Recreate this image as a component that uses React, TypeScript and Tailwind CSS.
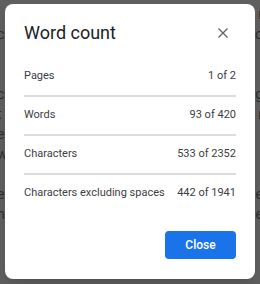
import React from "react";

const rows = [
  { label: "Pages", value: "1 of 2" },
  { label: "Words", value: "93 of 420" },
  { label: "Characters", value: "533 of 2352" },
  { label: "Characters excluding spaces", value: "442 of 1941" },
];

const bgLines: [string, string][] = [
  ["", "r"],
  ["c", "o"],
  ["", ""],
  ["", ""],
  ["c", "g"],
  ["t", "r"],
  ["e", "'"],
  ["w", "'"],
  ["", ""],
  ["e", "e"],
  ["hi", "ne"],
];

export default function App() {
  return (
    <div
      className="relative w-[260px] h-[284px] overflow-hidden bg-[#5f5f5f]"
      style={{ fontFamily: "Roboto, 'Liberation Sans', sans-serif" }}
    >
      <div className="flex flex-col pt-[4px] text-[#2e2e2e] text-[14px] leading-[20px]">
        {bgLines.map(([l, r], i) => (
          <div key={i} className="flex justify-between h-[20px] -ml-[3px] -mr-[3px]">
            <span>{l}</span>
            <span>{r}</span>
          </div>
        ))}
      </div>

      <div className="absolute left-[5px] top-[4px] w-[250px] h-[275px] rounded-[8px] bg-white shadow-lg flex flex-col pt-[15px] pl-[19px] pr-[19px] pb-[20px]">
        <div className="flex items-center justify-between h-[28px]">
          <span className="text-[18px] text-[#202124] leading-[28px]">Word count</span>
          <svg width="12" height="12" viewBox="0 0 12 12" className="mr-[7px]">
            <path d="M1.5 1.5 L10.5 10.5 M10.5 1.5 L1.5 10.5" stroke="#5f6368" strokeWidth="1.3" fill="none" />
          </svg>
        </div>
        <div className="flex flex-col mt-[11px]">
          {rows.map((r, i) => (
            <div
              key={r.label}
              className={
                "flex justify-between items-center pt-[8px] text-[11px] leading-[20px] text-[#3c4043] " +
                (i < rows.length - 1 ? "pb-[9px] border-b-2 border-[#dadce0]" : "")
              }
            >
              <span>{r.label}</span>
              <span>{r.value}</span>
            </div>
          ))}
        </div>
        <div className="flex-1" />
        <div className="flex justify-end">
          <button className="w-[71px] h-[28px] rounded-[4px] bg-[#1a73e8] text-white text-[12px] font-medium">
            Close
          </button>
        </div>
      </div>
    </div>
  );
}
